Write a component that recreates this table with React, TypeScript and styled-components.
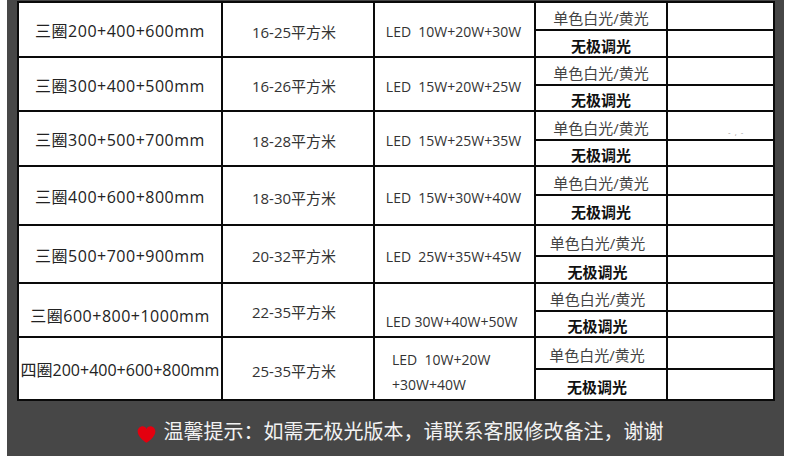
import React from "react";
import styled, { createGlobalStyle } from "styled-components";

const Global = createGlobalStyle`
  html, body { margin: 0; padding: 0; background: #ffffff; }
  body { font-family: "Open Sans", "Noto Sans CJK SC", sans-serif; }
`;

const Frame = styled.div`
  margin-left: 7px;
  width: 777px;
  box-sizing: border-box;
  background: #474747;
  padding: 1px 9px 0 10px;
`;

const Grid = styled.div<{ $rows: string }>`
  display: grid;
  grid-template-columns: 202px 150px 159px 130px 105px;
  grid-template-rows: ${(p) => p.$rows};
  gap: 2px;
  padding: 2px;
  background: #0a0a0a;
  width: 758px;
  box-sizing: border-box;
`;

const Cell = styled.div<{
  $span?: boolean;
  $size?: number;
  $color?: string;
  $weight?: number;
  $ls?: number;
  $pt?: number;
  $pb?: number;
  $pl?: number;
  $pr?: number;
  $v?: "center" | "flex-end" | "flex-start";
  $h?: "center" | "flex-start";
}>`
  grid-row: ${(p) => (p.$span ? "span 2" : "auto")};
  background: #ffffff;
  display: flex;
  align-items: ${(p) => p.$v || "center"};
  justify-content: ${(p) => p.$h || "center"};
  box-sizing: border-box;
  padding: ${(p) => p.$pt || 0}px ${(p) => p.$pr || 0}px ${(p) => p.$pb || 0}px
    ${(p) => p.$pl || 0}px;
  font-size: ${(p) => p.$size || 15}px;
  font-weight: ${(p) => p.$weight || 400};
  letter-spacing: ${(p) => p.$ls || 0}px;
  color: ${(p) => p.$color || "#333"};
  white-space: pre;
  line-height: 1.2;
  overflow: hidden;
`;

const PowerLines = styled.div`
  line-height: 25px;
  text-align: left;
`;

const Stray = styled.span`
  font-size: 8px;
  color: #9a9a9a;
  margin: 0 0 2px 60px;
  letter-spacing: 1px;
`;

const Footer = styled.div`
  height: 55px;
  display: flex;
  align-items: center;
  justify-content: center;
  gap: 8px;
  padding: 4px 0 0 8px;
  box-sizing: border-box;
  color: #f2f2f2;
  font-family: "Noto Sans CJK SC", sans-serif;
  font-size: 20px;
`;

const Heart = styled.svg`
  width: 19px;
  height: 17px;
  margin-top: 7px;
  flex: none;
`;

type Row = {
  name: string;
  area: string;
  power: string | string[];
  shift: number;
  namePt?: number;
  powerPb?: number;
  powerEnd?: boolean;
  stray?: boolean;
};

const rows: Row[] = [
  { name: "三圈200+400+600mm", area: "16-25平方米", power: "LED  10W+20W+30W", shift: 0 },
  { name: "三圈300+400+500mm", area: "16-26平方米", power: "LED  15W+20W+25W", shift: 0 },
  { name: "三圈300+500+700mm", area: "18-28平方米", power: "LED  15W+25W+35W", shift: 0, stray: true },
  { name: "三圈400+600+800mm", area: "18-30平方米", power: "LED  15W+30W+40W", shift: 0 },
  { name: "三圈500+700+900mm", area: "20-32平方米", power: "LED  25W+35W+45W", shift: 7 },
  { name: "三圈600+800+1000mm", area: "22-35平方米", power: "LED 30W+40W+50W", shift: 7, namePt: 13, powerEnd: true, powerPb: 5 },
  { name: "四圈200+400+600+800mm", area: "25-35平方米", power: ["LED  10W+20W", "+30W+40W"], shift: 8 },
];

const heights = [26, 25, 26, 24, 27, 24, 27, 28, 29, 25, 26, 24, 30, 29];

export default function App() {
  return (
    <>
      <Global />
      <Frame>
        <Grid $rows={heights.map((h) => `${h}px`).join(" ")}>
          {rows.map((r, i) => (
            <React.Fragment key={i}>
              <Cell
                $span
                $size={16}
                $color="#222"
                $ls={i === 6 ? 0 : 0.5}
                $pt={r.namePt ?? 5}
              >
                {r.name}
              </Cell>
              <Cell $span $size={15} $color="#333" $pt={4} $pr={8}>
                {r.area}
              </Cell>
              {Array.isArray(r.power) ? (
                <Cell $span $size={14} $color="#333" $h="flex-start" $pl={17} $pt={7}>
                  <PowerLines>
                    {r.power.map((l, k) => (
                      <div key={k}>{l}</div>
                    ))}
                  </PowerLines>
                </Cell>
              ) : (
                <Cell
                  $span
                  $size={14}
                  $color="#333"
                  $v={r.powerEnd ? "flex-end" : "center"}
                  $pt={r.powerEnd ? 0 : 6}
                  $pb={r.powerPb || 0}
                  $pr={r.powerEnd ? 6 : 2}
                >
                  {r.power}
                </Cell>
              )}
              <Cell $size={15} $color="#444" $pt={4} $pr={r.shift}>
                单色白光/黄光
              </Cell>
              <Cell $v={r.stray ? "flex-end" : "center"} $h="flex-start">
                {r.stray ? <Stray>- , -</Stray> : null}
              </Cell>
              <Cell $size={15} $weight={700} $color="#111" $pt={4} $pr={r.shift}>
                无极调光
              </Cell>
              <Cell />
            </React.Fragment>
          ))}
        </Grid>
        <Footer>
          <Heart viewBox="0 0 16 15">
            <path
              d="M8 14.8 C8 14.8 0.2 10 0.2 4.8 C0.2 2.2 2.3 0.3 4.6 0.3 C6.3 0.3 7.4 1.4 8 2.6 C8.6 1.4 9.7 0.3 11.4 0.3 C13.7 0.3 15.8 2.2 15.8 4.8 C15.8 10 8 14.8 8 14.8 Z"
              fill="#e3000f"
            />
          </Heart>
          <span>温馨提示：如需无极光版本，请联系客服修改备注，谢谢</span>
        </Footer>
      </Frame>
    </>
  );
}
